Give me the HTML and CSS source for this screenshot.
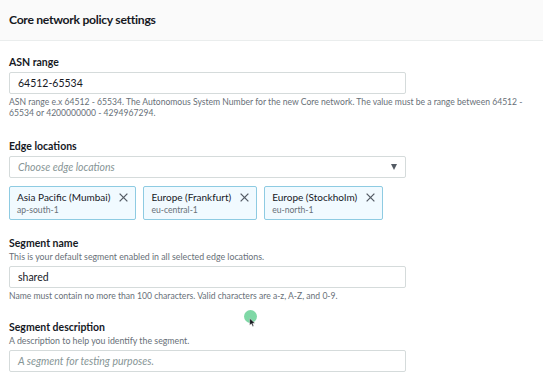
FILE: index.html
```html
<!DOCTYPE html>
<html>
<head>
<meta charset="utf-8">
<link rel="stylesheet" href="styles.css">
</head>
<body>
<div class="panel">
  <div class="header"><h2 class="title">Core network policy settings</h2></div>
  <div class="content">
    <div class="field field-asn">
      <div class="label">ASN range</div>
      <div class="input">64512-65534</div>
      <div class="hint">ASN range e.x 64512 - 65534. The Autonomous System Number for the new Core network. The value must be a range between 64512 - 65534 or 4200000000 - 4294967294.</div>
    </div>
    <div class="field field-edge">
      <div class="label">Edge locations</div>
      <div class="input select"><span class="placeholder">Choose edge locations</span><span class="caret"></span></div>
      <div class="tokens">
        <div class="token">
          <div class="token-text"><div class="token-name">Asia Pacific (Mumbai)</div><div class="token-sub">ap-south-1</div></div>
          <svg class="x" viewBox="0 0 10 10"><path d="M0.7 0.7L9.3 9.3M9.3 0.7L0.7 9.3"/></svg>
        </div>
        <div class="token">
          <div class="token-text"><div class="token-name">Europe (Frankfurt)</div><div class="token-sub">eu-central-1</div></div>
          <svg class="x" viewBox="0 0 10 10"><path d="M0.7 0.7L9.3 9.3M9.3 0.7L0.7 9.3"/></svg>
        </div>
        <div class="token">
          <div class="token-text"><div class="token-name">Europe (Stockholm)</div><div class="token-sub">eu-north-1</div></div>
          <svg class="x" viewBox="0 0 10 10"><path d="M0.7 0.7L9.3 9.3M9.3 0.7L0.7 9.3"/></svg>
        </div>
      </div>
    </div>
    <div class="field field-seg">
      <div class="label">Segment name</div>
      <div class="desc">This is your default segment enabled in all selected edge locations.</div>
      <div class="input">shared</div>
      <div class="hint">Name must contain no more than 100 characters. Valid characters are a-z, A-Z, and 0-9.</div>
    </div>
    <div class="field field-desc">
      <div class="label">Segment description</div>
      <div class="desc">A description to help you identify the segment.</div>
      <div class="input"><span class="placeholder">A segment for testing purposes.</span></div>
    </div>
  </div>
  <div class="cursor">
    <span class="dot"></span>
    <svg class="pointer" viewBox="0 0 10 14"><path d="M1 1L1 11L3.5 8.8L5.2 12.6L6.8 11.9L5.2 8.2L8.5 8.2Z"/></svg>
  </div>
</div>
</body>
</html>
```
FILE: styles.css
```css
* { box-sizing: border-box; }
html, body { margin: 0; padding: 0; background: #fff; }
body {
  font-family: Lato, "Noto Sans", sans-serif;
  color: #16191f;
  width: 543px;
  height: 380px;
  overflow: hidden;
}
.panel { position: relative; }
.header {
  height: 41px;
  background: #fafafa;
  border-bottom: 1px solid #eaeded;
  padding: 0 9px 1px 9px;
  display: flex;
  align-items: center;
}
.title {
  margin: 0;
  font-size: 12.2px;
  font-weight: 700;
  letter-spacing: -0.3px;
}
.content { padding: 14px 9px 0 9px; }
.label { font-size: 10.5px; font-weight: 700; line-height: 14px; color: #16191f; }
.desc { font-size: 8.8px; color: #687078; line-height: 13px; }
.hint { font-size: 8.6px; color: #687078; line-height: 11px; margin-top: 3px; }
.input {
  width: 397px;
  height: 22px;
  border: 1px solid #d5dbdb;
  border-radius: 2px;
  padding: 0 8px;
  font-size: 10.5px;
  display: flex;
  align-items: center;
  margin-top: 3px;
}
.placeholder { color: #879596; font-style: italic; }
.select { justify-content: space-between; }
.caret {
  width: 0; height: 0;
  border-left: 3.5px solid transparent;
  border-right: 3.5px solid transparent;
  border-top: 6px solid #545b64;
}
.field-edge { margin-top: 20px; }
.tokens { display: flex; gap: 7px; margin-top: 8px; }
.token {
  background: #f1faff;
  border: 1px solid #8ecbe2;
  border-radius: 2px;
  height: 34px;
  padding: 3px 7px 0 7px;
  display: flex;
  align-items: flex-start;
  gap: 9px;
}
.token-name { font-size: 10px; line-height: 14px; }
.token-sub { font-size: 8.6px; color: #687078; line-height: 12px; }
.x { width: 9px; height: 9px; margin-top: 3px; fill: none; stroke: #545b64; stroke-width: 1.4; }
.field-seg { margin-top: 16px; }
.field-desc { margin-top: 18px; }
.cursor { position: absolute; left: 244px; top: 310px; width: 20px; height: 20px; }
.dot { position: absolute; left: 0; top: 0; width: 13px; height: 13px; border-radius: 50%; background: #7fd8a6; }
.pointer { position: absolute; left: 5px; top: 7px; width: 7px; height: 11px; fill: #16191f; stroke: #fff; stroke-width: 0.6; }
```
